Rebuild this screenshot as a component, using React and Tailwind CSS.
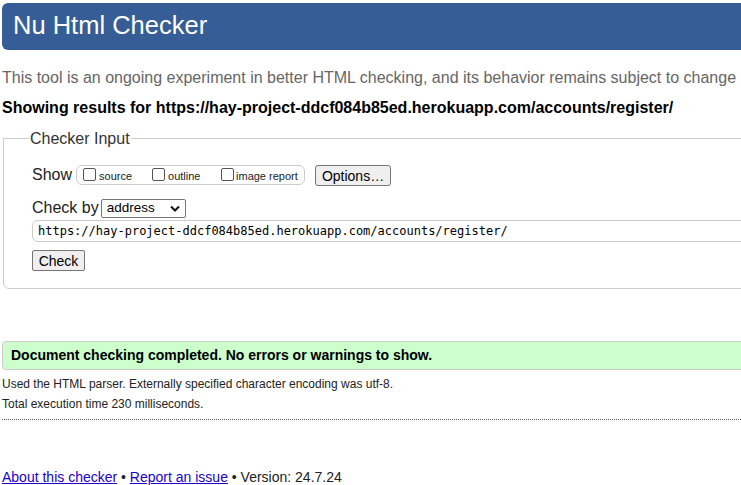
export default function App() {
  return (
    <div className="w-[741px] h-[485px] overflow-hidden bg-white" style={{ fontFamily: '"Liberation Sans", Arial, sans-serif' }}>
      <div className="w-[780px] pl-[2px]">
        <div className="mt-[3px] h-[47px] rounded-l-[6px] bg-[#365d95] pl-[11px] pb-[2px] flex items-center">
          <h1 className="text-[25.5px] leading-none text-white font-normal">Nu Html Checker</h1>
        </div>
        <p className="mt-[18px] text-[16px] leading-[19px] text-[#666]">This tool is an ongoing experiment in better HTML checking, and its behavior remains subject to change</p>
        <p className="mt-[11px] text-[16px] leading-[19px] font-bold text-black">Showing results for https://hay-project-ddcf084b85ed.herokuapp.com/accounts/register/</p>
        <fieldset className="mt-[12px] ml-[1px] border border-[#ccc] rounded-bl-[6px] pl-[25px] h-[160px]">
          <legend className="px-[1px] text-[16px] leading-[19px] text-[#333]">Checker Input</legend>
          <div className="pl-[3px]">
            <div className="mt-[16px] flex items-center h-[22px]">
              <span className="text-[16px] text-[#222] mr-[4px]">Show</span>
              <div className="h-[20px] w-[229px] border border-[#ccc] rounded-[6px] flex items-center pl-[6px] text-[11px] text-[#222]">
                <label className="flex items-center w-[69px]">
                  <span className="inline-block w-[13px] h-[13px] border border-[#555] rounded-[2px] mr-[3px] -mt-[2px]" />
                  <span className="mt-[2px]">source</span>
                </label>
                <label className="flex items-center w-[69px]">
                  <span className="inline-block w-[13px] h-[13px] border border-[#555] rounded-[2px] mr-[3px] -mt-[2px]" />
                  <span className="mt-[2px]">outline</span>
                </label>
                <label className="flex items-center">
                  <span className="inline-block w-[13px] h-[13px] border border-[#555] rounded-[2px] mr-[2px] -mt-[2px]" />
                  <span className="mt-[2px]">image report</span>
                </label>
              </div>
              <button className="ml-[10px] h-[21px] w-[76px] border border-[#767676] rounded-[3px] bg-[#efefef] text-[14px] text-black">Options…</button>
            </div>
            <div className="mt-[12px] flex items-center h-[20px]">
              <span className="text-[16px] text-[#222] mr-[2px]">Check by</span>
              <div className="h-[19px] w-[85px] border border-[#767676] rounded-[2px] flex items-center justify-between px-[5px] text-[13.5px] text-black">
                <span>address</span>
                <svg width="10" height="7" viewBox="0 0 10 7"><path d="M1 1.5 L5 5.5 L9 1.5" fill="none" stroke="#111" strokeWidth="2" /></svg>
              </div>
            </div>
            <div className="mt-[2px] h-[22px] border border-[#ccc] rounded-l-[6px] flex items-center pl-[5px] text-[12px] text-black" style={{ fontFamily: '"DejaVu Sans Mono", monospace' }}>
              https://hay-project-ddcf084b85ed.herokuapp.com/accounts/register/
            </div>
            <button className="mt-[8px] h-[21px] w-[53px] border border-[#767676] rounded-[2px] bg-[#efefef] text-[14px] text-black">Check</button>
          </div>
        </fieldset>
        <div className="mt-[52px] h-[29px] border border-[#ccc] rounded-l-[4px] bg-[#ccffcc] flex items-center pl-[8px] text-[14px] font-bold text-black">
          Document checking completed. No errors or warnings to show.
        </div>
        <p className="mt-[7px] text-[12px] leading-[14px] text-[#222]">Used the HTML parser. Externally specified character encoding was utf-8.</p>
        <p className="mt-[6px] text-[12px] leading-[14px] text-[#222]">Total execution time 230 milliseconds.</p>
        <div className="mt-[8px] w-[739px] border-t border-dotted border-[#555]" />
        <p className="mt-[49px] text-[14px] leading-[16px] text-[#222]">
          <a className="text-[#2200cc] underline">About this checker</a> • <a className="text-[#2200cc] underline">Report an issue</a> • Version: 24.7.24
        </p>
      </div>
    </div>
  );
}
